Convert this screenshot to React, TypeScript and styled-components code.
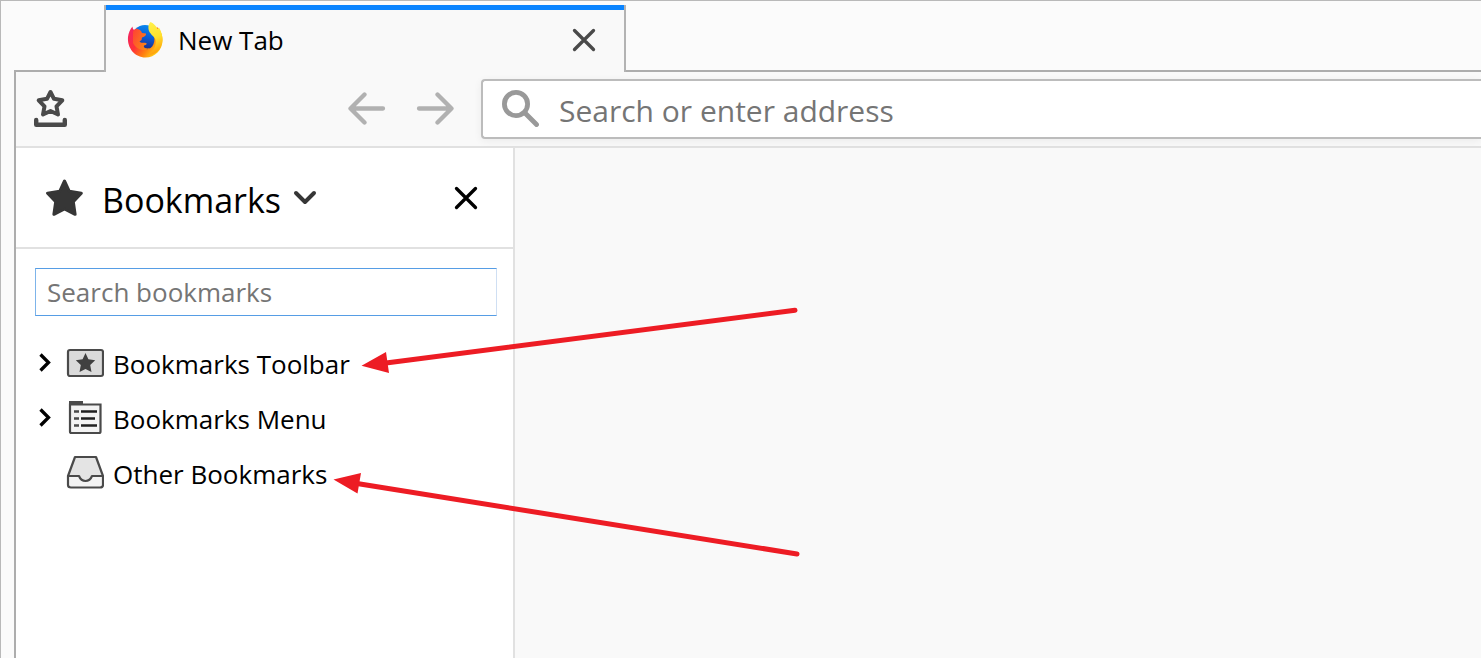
import React from "react";
import styled, { createGlobalStyle } from "styled-components";

const GlobalStyle = createGlobalStyle`
  * { box-sizing: border-box; }
  body {
    margin: 0;
    background: #fbfbfb;
    color: #000;
    font-family: "Segoe UI", "Open Sans", "Noto Sans", sans-serif;
  }
  button, input { font: inherit; color: inherit; }
  svg { display: block; flex: none; }
`;

const BrowserWindow = styled.div`
  position: relative;
  display: flex;
  flex-direction: column;
  min-height: 100vh;
  overflow: hidden;
  border: solid #b9b9b9;
  border-width: 1px 0 0 1px;
`;

const TabStrip = styled.div`
  display: flex;
  height: 71px;
  padding: 4px 0 0 13px;
`;

const StripEdge = styled.div<{ $lead?: boolean }>`
  flex: ${(p) => (p.$lead ? "0 0 90px" : "1")};
  border-bottom: 2px solid #adadad;
`;

const Tab = styled.div`
  display: flex;
  align-items: center;
  flex: 0 1 522px;
  padding: 2px 22px 0 20px;
  background: linear-gradient(#0a84ff, #0a84ff) top / 100% 5px no-repeat #f9f9f9;
  border: solid #b3b3b3;
  border-width: 0 2px;
  background-clip: padding-box;
`;

const TabTitle = styled.span`
  flex: 1;
  margin-left: 14px;
  font-size: 26px;
  line-height: 36px;
`;

const IconButton = styled.button`
  display: flex;
  align-items: center;
  justify-content: center;
  width: 36px;
  height: 40px;
  padding: 0;
  border: 0;
  background: transparent;
`;

const Frame = styled.div`
  display: flex;
  flex-direction: column;
  flex: 1;
  margin-left: 13px;
  border-left: 2px solid #adadad;
`;

const Toolbar = styled.div`
  display: flex;
  align-items: center;
  height: 76px;
  padding-left: 17px;
  background: #f9f9f9;
  border-bottom: 2px solid #e1e1e1;
`;

const NavButtons = styled.div`
  display: flex;
  gap: 32px;
  margin: 0 28px 0 auto;
`;

const ToolbarStart = styled.div`
  display: flex;
  align-items: center;
  flex: 0 0 448px;
`;

const AddressBar = styled.label`
  display: flex;
  align-items: center;
  flex: 1;
  height: 60px;
  padding-left: 18px;
  background: #fff;
  border: 2px solid #bcbcbc;
  border-right: 0;
  border-radius: 4px 0 0 4px;
  box-shadow: 0 2px 8px rgba(0, 0, 0, 0.06);
`;

const AddressInput = styled.input`
  flex: 1;
  min-width: 0;
  margin-left: 20px;
  padding: 4px 0 0;
  border: 0;
  outline: 0;
  background: transparent;
  font-size: 30px;
  line-height: 40px;
  &::placeholder { color: #757575; opacity: 1; }
`;

const Body = styled.div`
  display: flex;
  flex: 1;
`;

const Sidebar = styled.aside`
  flex: 0 0 499px;
  background: #fff;
  border-right: 2px solid #e1e1e1;
`;

const Page = styled.main`
  flex: 1;
  background: #f9f9f9;
`;

const SidebarHeader = styled.header`
  display: flex;
  align-items: center;
  justify-content: space-between;
  height: 101px;
  padding: 0 29px 0 30px;
  border-bottom: 2px solid #e1e1e1;
`;

const SidebarSwitcher = styled.button`
  display: flex;
  align-items: center;
  padding: 0;
  border: 0;
  background: transparent;
`;

const SidebarTitle = styled.span`
  margin: 0 12px 0 18px;
  padding-top: 4px;
  font-size: 34px;
  line-height: 48px;
`;

const SearchBox = styled.input`
  display: block;
  width: 462px;
  height: 48px;
  margin: 19px 0 19px 19px;
  padding: 0 11px;
  border: 1px solid #569de5;
  border-left-color: #7db4ea;
  border-right-color: #cfdff3;
  outline: 0;
  background: #fff;
  font-size: 26px;
  &::placeholder { color: #757575; opacity: 1; }
`;

const Tree = styled.ul`
  margin: 0;
  padding: 0 0 0 22px;
  list-style: none;
`;

const TreeRow = styled.li`
  display: flex;
  align-items: center;
  height: 55px;
`;

const Twisty = styled.button`
  display: flex;
  align-items: center;
  width: 28px;
  height: 28px;
  padding: 0;
  border: 0;
  background: transparent;
`;

const TwistySpace = styled.span`
  width: 28px;
`;

const RowLabel = styled.span`
  margin-left: 9px;
  padding-top: 2px;
  font-size: 26px;
  line-height: 36px;
`;

const Annotations = styled.svg`
  position: absolute;
  top: -1px;
  left: -1px;
  pointer-events: none;
`;

const FirefoxLogo = () => (
  <svg width="38" height="38" viewBox="0 0 38 38" aria-hidden="true">
    <defs>
      <linearGradient id="fox" x1="0.1" y1="0.2" x2="0.9" y2="0.7">
        <stop offset="0" stopColor="#f5285a" />
        <stop offset="0.35" stopColor="#ff3038" />
        <stop offset="0.7" stopColor="#ff8010" />
        <stop offset="1" stopColor="#ffc814" />
      </linearGradient>
      <linearGradient id="globe" x1="0.6" y1="0" x2="0.4" y2="1">
        <stop offset="0" stopColor="#0a8af0" />
        <stop offset="0.45" stopColor="#0b5bd4" />
        <stop offset="0.85" stopColor="#1b2f8c" />
      </linearGradient>
      <linearGradient id="tail" x1="0.3" y1="0" x2="0.5" y2="1">
        <stop offset="0" stopColor="#fff04a" />
        <stop offset="0.5" stopColor="#ffe22b" />
        <stop offset="1" stopColor="#ff9a0a" />
      </linearGradient>
      <linearGradient id="face" x1="0" y1="0" x2="1" y2="0.6">
        <stop offset="0" stopColor="#ff4035" />
        <stop offset="1" stopColor="#f98a14" />
      </linearGradient>
    </defs>
    <circle cx="19" cy="17.500" r="13.500" fill="url(#globe)" />
    <path fill="url(#fox)" d="M6.500 5.500C4 8 2.500 12 2 16C1 27 9 36.500 19.500 36.500C29 36.500 36.500 29 36.500 19C36.500 14 34.500 9 31 6L27 12C30.500 20 27 28.500 20 28.500C14 28.500 9 22 10 14L12 8C10 7.500 9 8 8 9C7 8 6.500 7 6.500 5.500Z" />
    <path fill="url(#face)" d="M7 10C10 7 13 7.500 15 10L16 12L20 12.500C20.500 14 19 15.500 16 16.500L15.500 19L13.500 20.500C15 22.500 18 21.500 20 22C21.500 22.500 20.500 24 18 24.500C17 27 21 28 24 27C20 31 10 29 7 22Z" />
    <path fill="url(#tail)" d="M24.500 1C28 2.500 30 5 31.500 8L33 6.500C38 15 38 25 31 31C28.500 33 25 34 22 33.500C28 30 30.500 25 29.500 19C28.500 15 23 13 22.500 8C22 5 23 2.500 24.500 1Z" />
  </svg>
);

const CloseIcon = ({ color }: { color: string }) => (
  <svg width="24" height="24" viewBox="0 0 24 24" aria-hidden="true">
    <path d="M2.500 2.500 21.500 21.500M21.500 2.500 2.500 21.500" fill="none" stroke={color} strokeWidth="3.300" strokeLinecap="round" />
  </svg>
);

const BookmarksTrayIcon = () => (
  <svg width="36" height="40" viewBox="0 0 36 40" fill="none" stroke="#4a4a4a" strokeLinejoin="round" strokeLinecap="round" aria-hidden="true">
    <path strokeWidth="4" d="M17.500 3 21 9.800 29.300 11.300 23.500 17.300 25 25.500 17.500 22 10 25.500 11.500 17.300 5.700 11.300 14 9.800Z" />
    <path strokeWidth="4.400" d="M3.200 31V35.800H31.800V31" />
  </svg>
);

const ArrowIcon = ({ flip }: { flip?: boolean }) => (
  <svg width="38" height="34" viewBox="0 0 38 34" aria-hidden="true">
    <path
      d={flip ? "M3 16.500H34M21.500 2.500 35.500 16.500 21.500 30.500" : "M35 16.500H4M16.500 2.500 2.500 16.500 16.500 30.500"}
      fill="none" stroke="#b1b1b1" strokeWidth="4.300" strokeLinecap="round" strokeLinejoin="round"
    />
  </svg>
);

const SearchIcon = () => (
  <svg width="38" height="38" viewBox="0 0 38 38" fill="none" stroke="#999" aria-hidden="true">
    <circle cx="15" cy="14" r="11.600" strokeWidth="4.800" />
    <path d="M24 23 35.500 34.500" strokeWidth="4.800" strokeLinecap="round" />
  </svg>
);

const StarIcon = () => (
  <svg width="38" height="38" viewBox="0 0 38 38" aria-hidden="true">
    <path fill="#363636" stroke="#363636" strokeWidth="3" strokeLinejoin="round" d="M18.500 2 23.300 12.300 35.300 14.200 27.300 22.800 29.100 35.300 18.500 30 7.900 35.300 9.700 22.800 1.600 14.200 13.700 12.300Z" />
  </svg>
);

const ChevronIcon = () => (
  <svg width="24" height="16" viewBox="0 0 24 16" aria-hidden="true">
    <path d="M3 3 12 12 21 3" fill="none" stroke="#363636" strokeWidth="4" strokeLinecap="round" strokeLinejoin="round" />
  </svg>
);

const TwistyIcon = () => (
  <svg width="14" height="20" viewBox="0 0 14 20" aria-hidden="true">
    <path d="M2.500 1.500 10.500 9.500 2.500 17.500" fill="none" stroke="#000" strokeWidth="3.300" />
  </svg>
);

const ToolbarFolderIcon = () => (
  <svg width="38" height="38" viewBox="0 0 38 38" aria-hidden="true">
    <rect x="2" y="6" width="35" height="26" rx="2" fill="#dadada" stroke="#4a4a4a" strokeWidth="2.200" />
    <path fill="#404040" d="M19.500 9 22.400 15.200 29.200 16.200 24.200 21 25.500 28 19.500 25 13.500 28 14.800 21 9.800 16.200 16.600 15.200Z" />
  </svg>
);

const MenuFolderIcon = () => (
  <svg width="38" height="38" viewBox="0 0 38 38" aria-hidden="true">
    <path d="M4 32.500V5.500H34.500V32.500Q34.500 34 33 34H5.500Q4 34 4 32.500Z" fill="#f3f3f3" stroke="#4a4a4a" strokeWidth="2.200" />
    <path d="M3 2H17V6H3Z" fill="#4a4a4a" />
    <path d="M8 12.500H13M8 19.500H13M8 26.500H13" stroke="#4a4a4a" strokeWidth="2.500" />
    <path d="M15 12.500H31M15 19.500H29M15 26.500H31" stroke="#202020" strokeWidth="2.500" />
  </svg>
);

const TrayIcon = () => (
  <svg width="38" height="38" viewBox="0 0 38 38" aria-hidden="true">
    <path d="M9 3H30L37 22V31Q37 33.500 34 33.500H5Q2 33.500 2 31V22Z" fill="#e4e4e4" />
    <path d="M2 22H13Q15 27 19.500 27Q24 27 26 22H37V31Q37 33.500 34 33.500H5Q2 33.500 2 31Z" fill="#f3f3f3" />
    <path d="M2 22 9 3H30L37 22V31Q37 33.500 34 33.500H5Q2 33.500 2 31ZM2 22H13Q15 27 19.500 27Q24 27 26 22H37" fill="none" stroke="#4a4a4a" strokeWidth="2.200" strokeLinejoin="round" />
  </svg>
);

const folders = [
  { label: "Bookmarks Toolbar", Icon: ToolbarFolderIcon, expandable: true },
  { label: "Bookmarks Menu", Icon: MenuFolderIcon, expandable: true },
  { label: "Other Bookmarks", Icon: TrayIcon, expandable: false },
];

export default function App() {
  return (
    <>
      <GlobalStyle />
      <BrowserWindow>
        <TabStrip>
          <StripEdge $lead />
          <Tab>
            <FirefoxLogo />
            <TabTitle>New Tab</TabTitle>
            <IconButton aria-label="Close tab"><CloseIcon color="#4a4a4a" /></IconButton>
          </Tab>
          <StripEdge />
        </TabStrip>
        <Frame>
          <Toolbar>
            <ToolbarStart>
              <IconButton aria-label="Show bookmarks"><BookmarksTrayIcon /></IconButton>
              <NavButtons>
                <IconButton aria-label="Back"><ArrowIcon /></IconButton>
                <IconButton aria-label="Forward"><ArrowIcon flip /></IconButton>
              </NavButtons>
            </ToolbarStart>
            <AddressBar>
              <SearchIcon />
              <AddressInput type="text" aria-label="Address" placeholder="Search or enter address" />
            </AddressBar>
          </Toolbar>
          <Body>
            <Sidebar>
              <SidebarHeader>
                <SidebarSwitcher>
                  <StarIcon />
                  <SidebarTitle>Bookmarks</SidebarTitle>
                  <ChevronIcon />
                </SidebarSwitcher>
                <IconButton aria-label="Close sidebar"><CloseIcon color="#000" /></IconButton>
              </SidebarHeader>
              <SearchBox type="text" aria-label="Search bookmarks" placeholder="Search bookmarks" />
              <Tree>
                {folders.map(({ label, Icon, expandable }) => (
                  <TreeRow key={label}>
                    {expandable ? (
                      <Twisty aria-label={`Expand ${label}`}><TwistyIcon /></Twisty>
                    ) : (
                      <TwistySpace />
                    )}
                    <Icon />
                    <RowLabel>{label}</RowLabel>
                  </TreeRow>
                ))}
              </Tree>
            </Sidebar>
            <Page />
          </Body>
        </Frame>
        <Annotations width="820" height="580" viewBox="0 0 820 580" aria-hidden="true">
          <g fill="#ed1c24" stroke="#ed1c24">
            <path d="M386 363 795 310.300M357 483.500 797 554" strokeWidth="5" strokeLinecap="round" />
            <path d="M361.500 365.800 386 352 389 373ZM333.500 479.500 361 473 357.500 493.500Z" stroke="none" />
          </g>
        </Annotations>
      </BrowserWindow>
    </>
  );
}
